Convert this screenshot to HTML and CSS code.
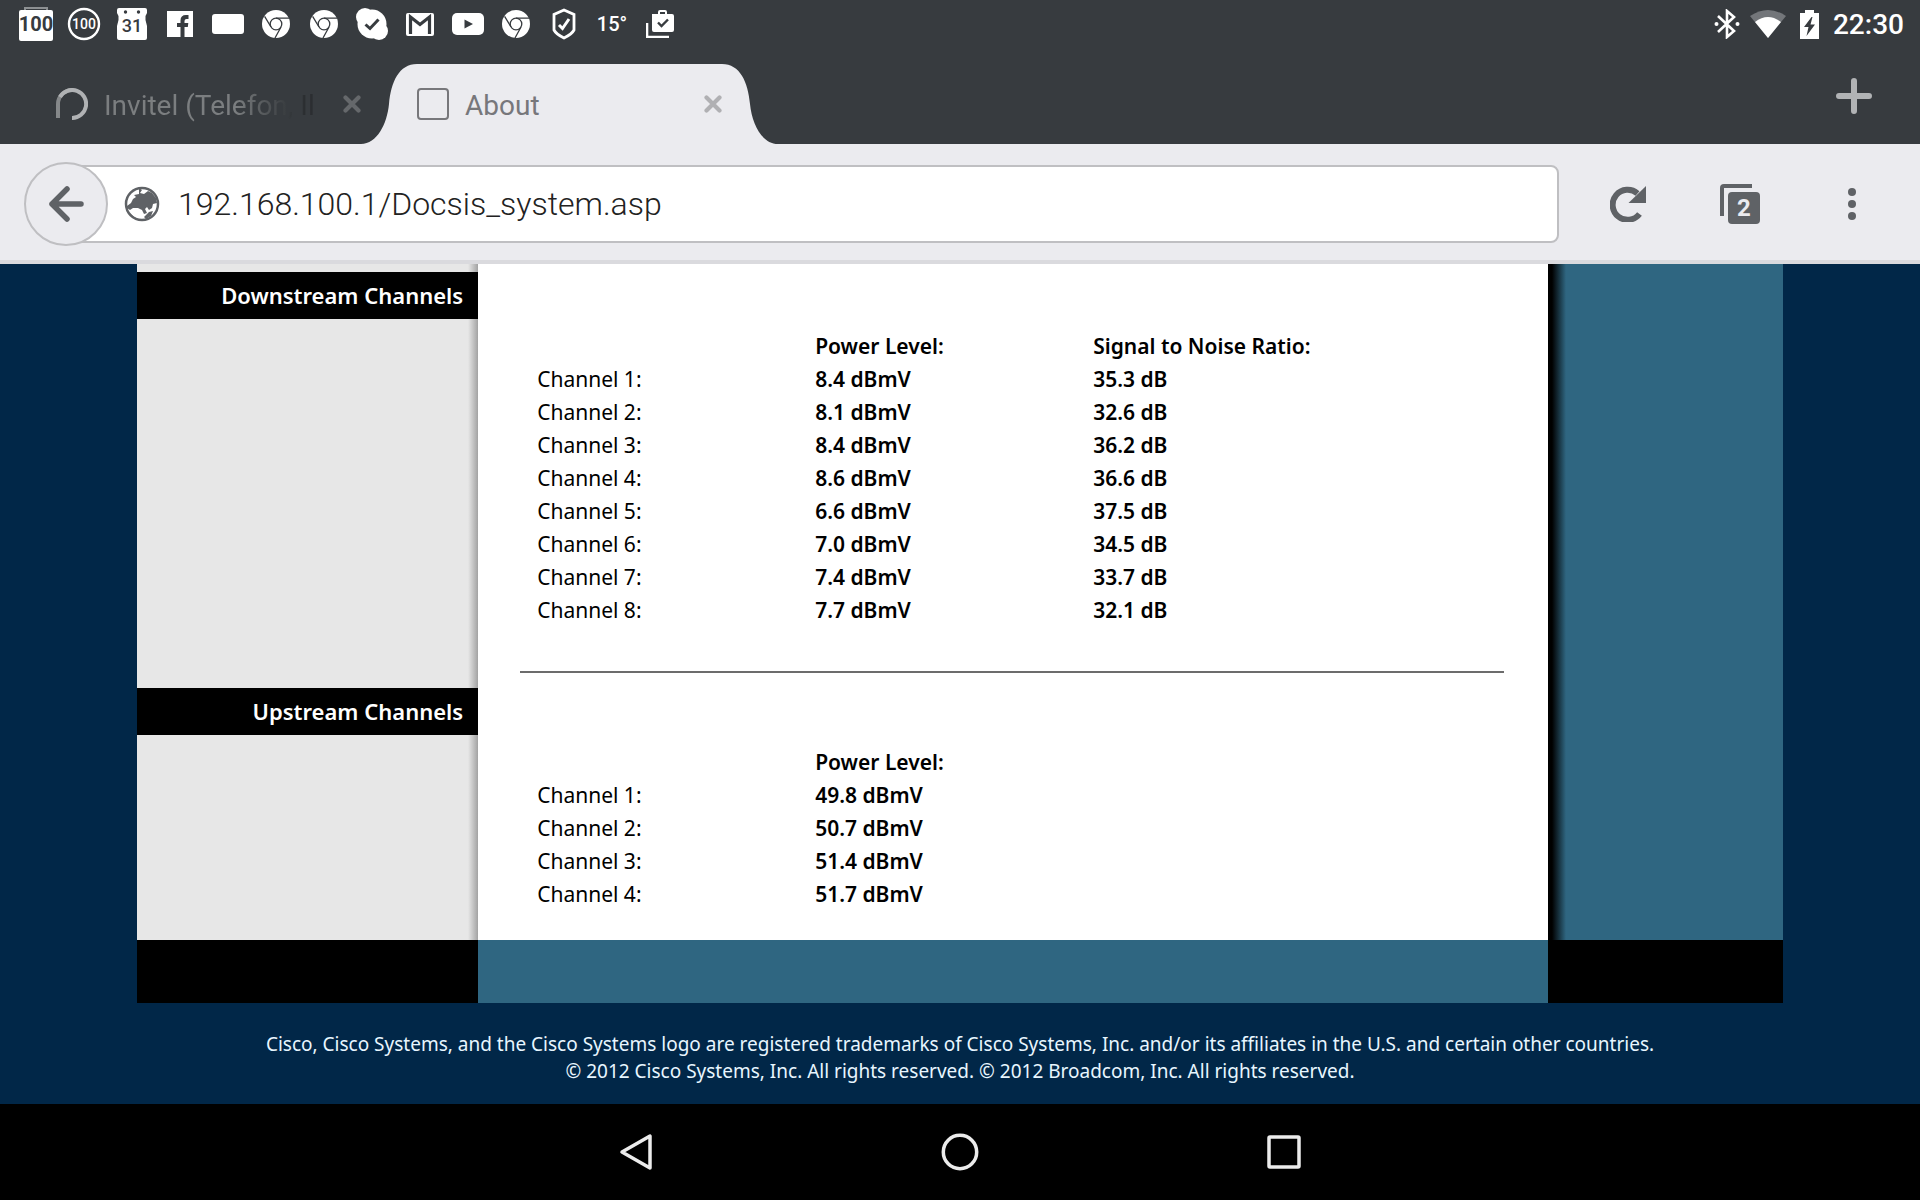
FILE: index.html
```html
<!DOCTYPE html>
<html lang="en">
<head>
    <meta charset="utf-8">
    <meta name="viewport" content="width=device-width, initial-scale=1.0">
    <title>About</title>
    <link rel="stylesheet" href="styles.css">
</head>
<body>
    <!-- shared icons -->
    <svg class="defs" width="0" height="0" aria-hidden="true">
        <symbol id="chrome" viewBox="0 0 28 28">
            <circle cx="14" cy="14" r="14" fill="#fff"/>
            <g fill="none" stroke="#373b3f" stroke-width="1.3">
                <circle cx="14" cy="14" r="5.8"/>
                <path d="M14 8.2H27M9 17L2.6 6.4M19 17L13 28"/>
            </g>
        </symbol>
        <symbol id="close" viewBox="0 0 18 18">
            <path d="M2.500 2.500L15.500 15.500M15.500 2.500L2.500 15.500" stroke="currentColor" stroke-width="4.200" stroke-linecap="round"/>
        </symbol>
    </svg>

    <div class="statusbar">
        <div class="notifications">
            <span class="slot"><svg width="34" height="34" viewBox="0 0 34 34"><path d="M6 3V1h22v2" fill="none" stroke="#8d9092" stroke-width="2"/><rect y="3" width="34" height="31" rx="2" fill="#fff"/></svg><b class="num num-box">100</b></span>
            <span class="slot"><svg width="34" height="34" viewBox="0 0 34 34"><circle cx="17" cy="17" r="15" fill="none" stroke="#fff" stroke-width="2.400"/></svg><b class="num num-ring">100</b></span>
            <span class="slot"><svg width="32" height="32" viewBox="0 0 32 32"><path d="M3 0H29Q31 0 31 2V5L29.500 8V12L31 18V30Q31 32 29 32H3Q1 32 1 30V18L2.500 12V8L1 5V2Q1 0 3 0Z" fill="#fff"/><circle cx="9.500" cy="4" r="1.700" fill="#373b3f"/><circle cx="22.500" cy="4" r="1.700" fill="#373b3f"/></svg><b class="num num-cal">31</b></span>
            <span class="slot"><svg width="26" height="26" viewBox="0 0 26 26"><path d="M0 0H26V26H0Z" fill="#fff"/><path d="M13.500 26V16H10V12H13.500V9.500Q13.500 4 19 4H21.500V8H19.500Q17.500 8 17.500 10V12H21.300L20.800 16H17.500V26Z" fill="#373b3f"/></svg></span>
            <span class="slot"><svg width="32" height="20" viewBox="0 0 32 20"><rect width="32" height="20" rx="3" fill="#fff"/></svg></span>
            <span class="slot"><svg width="28" height="28"><use href="#chrome"/></svg></span>
            <span class="slot"><svg width="28" height="28"><use href="#chrome"/></svg></span>
            <span class="slot"><svg width="32" height="32" viewBox="0 0 32 32"><circle cx="16" cy="16" r="14.500" fill="#fff"/><circle cx="9" cy="9" r="9" fill="#fff"/><circle cx="23" cy="23" r="9" fill="#fff"/><path d="M9.500 16.500L14 20.500L22.500 11.500" fill="none" stroke="#373b3f" stroke-width="3"/></svg></span>
            <span class="slot"><svg width="28" height="23" viewBox="0 0 28 23"><rect width="28" height="23" rx="2" fill="#fff"/><path d="M4.500 21V4L14 11.500L23.500 4V21" fill="none" stroke="#373b3f" stroke-width="3.200"/></svg></span>
            <span class="slot"><svg width="32" height="22" viewBox="0 0 32 22"><rect width="32" height="22" rx="5" fill="#fff"/><path d="M12.500 6.500L21 11L12.500 15.500Z" fill="#373b3f"/></svg></span>
            <span class="slot"><svg width="28" height="28"><use href="#chrome"/></svg></span>
            <span class="slot"><svg width="24" height="32" viewBox="0 0 24 32"><path d="M12 2L22 6.500V22Q20 26 12 30Q4 26 2 22V6.500Z" fill="none" stroke="#fff" stroke-width="2.800"/><path d="M7 17L10.500 20.500L17 11" fill="none" stroke="#fff" stroke-width="3"/></svg></span>
            <span class="slot temp">15°</span>
            <span class="slot"><svg width="28" height="28" viewBox="0 0 28 28"><path d="M1 13V27H23" fill="none" stroke="#fff" stroke-width="2.600"/><path d="M6 4H12V2Q12 0 14 0H19Q21 0 21 2V4H26Q28 4 28 6V20Q28 22 26 22H8Q6 22 6 20ZM14 4H19V2H14Z" fill="#fff" fill-rule="evenodd"/><path d="M12 12.500L15.500 16L22 9.500" fill="none" stroke="#373b3f" stroke-width="2.400"/></svg></span>
        </div>
        <div class="system">
            <svg width="26" height="30" viewBox="0 0 26 30"><path d="M4 7L20 22L13 28V2L20 8L4 23" fill="none" stroke="#fff" stroke-width="2.600"/><circle cx="2.500" cy="15" r="2" fill="#fff"/><circle cx="23.500" cy="15" r="2" fill="#fff"/></svg>
            <svg width="36" height="28" viewBox="0 0 36 28"><path d="M0 6Q18 -6 36 6L18 28Z" fill="#73767a"/><path d="M5 12Q18 2 31 12L18 28Z" fill="#fff"/></svg>
            <svg class="battery" width="19" height="29" viewBox="0 0 19 29"><path d="M0 3H5V0H14V3H19V29H0Z" fill="#fff"/><path d="M11.500 7L4 17H8.500L6.500 26L15 14.500H10.500L12.500 7Z" fill="#373b3f"/></svg>
            <span class="clock">22:30</span>
        </div>
    </div>

    <div class="tabs">
        <div class="tab">
            <svg width="32" height="32" viewBox="0 0 32 32"><path d="M16 2A14 14 0 0 0 2 16V30" fill="none" stroke="#85888a" stroke-width="4"/><path d="M4 9A14 14 0 1 1 16 30" fill="none" stroke="#b0b2b4" stroke-width="4"/></svg>
            <span class="tab-title fading">Invitel (Telefon, Il</span>
            <button class="tab-close" type="button" aria-label="Close tab"><svg width="18" height="18"><use href="#close"/></svg></button>
        </div>
        <div class="tab active">
            <svg width="56" height="80" viewBox="0 0 56 80"><path d="M0 80C16 80 26 60 28 40C30 18 38 0 56 0V80Z" fill="#ebebef"/></svg>
            <div class="tab-body">
                <span class="blank-icon"></span>
                <span class="tab-title">About</span>
                <button class="tab-close" type="button" aria-label="Close tab"><svg width="18" height="18"><use href="#close"/></svg></button>
            </div>
            <svg width="56" height="80" viewBox="0 0 56 80"><path d="M56 80C40 80 30 60 28 40C26 18 18 0 0 0V80Z" fill="#ebebef"/></svg>
        </div>
        <button class="new-tab" type="button" aria-label="New tab"><svg width="36" height="36" viewBox="0 0 36 36"><path d="M18 3V33M3 18H33" stroke="#b1b3b5" stroke-width="6" stroke-linecap="round"/></svg></button>
    </div>

    <div class="toolbar">
        <button class="back" type="button" aria-label="Back"><svg width="36" height="36" viewBox="0 0 36 36"><path d="M33 18H4M19 3L4 18L19 33" fill="none" stroke="#5f6266" stroke-width="5.500" stroke-linecap="round" stroke-linejoin="round"/></svg></button>
        <label class="urlbox">
            <svg width="36" height="36" viewBox="0 0 36 36"><circle cx="18" cy="18" r="16" fill="#fff" stroke="#5f6266" stroke-width="2.500"/><path d="M15 2L18 4L16 7L20 8L24 5L28 7L32 12L33 17L29 18L28 22L25 24L23 21L21 23L23 27L20 28L18 24L14 22L9 22L6 24L3 22L3 20L7 17L9 13L12 11L10 9L15 8ZM25 26L29 25L27 30L22 33L20 31ZM6 27L9 30L12 32L9 32Z" fill="#5f6266"/></svg>
            <input class="url" type="text" value="192.168.100.1/Docsis_system.asp" aria-label="Address">
        </label>
        <button class="tool" type="button" aria-label="Reload"><svg width="36" height="36" viewBox="0 0 36 36"><path d="M29.500 28A15 15 0 1 1 27.500 7.500" fill="none" stroke="#5f6266" stroke-width="6"/><path d="M36 0V17H18.500Z" fill="#5f6266"/></svg></button>
        <button class="tool" type="button" aria-label="Tabs">
            <span class="tab-stack"><span class="tab-count">2</span></span>
        </button>
        <button class="tool" type="button" aria-label="Menu"><svg width="8" height="32" viewBox="0 0 8 32"><g fill="#5f6266"><circle cx="4" cy="4" r="4"/><circle cx="4" cy="16" r="4"/><circle cx="4" cy="28" r="4"/></g></svg></button>
    </div>

    <main class="page">
        <div class="content">
            <section class="row">
                <div class="side side-first"><h2>Downstream Channels</h2></div>
                <div class="main main-first">
                    <table class="levels">
                        <thead>
                            <tr><td></td><th scope="col">Power Level:</th><th scope="col">Signal to Noise Ratio:</th></tr>
                        </thead>
                        <tbody>
                            <tr><td>Channel 1:</td><td class="val">8.4 dBmV</td><td class="val">35.3 dB</td></tr>
                            <tr><td>Channel 2:</td><td class="val">8.1 dBmV</td><td class="val">32.6 dB</td></tr>
                            <tr><td>Channel 3:</td><td class="val">8.4 dBmV</td><td class="val">36.2 dB</td></tr>
                            <tr><td>Channel 4:</td><td class="val">8.6 dBmV</td><td class="val">36.6 dB</td></tr>
                            <tr><td>Channel 5:</td><td class="val">6.6 dBmV</td><td class="val">37.5 dB</td></tr>
                            <tr><td>Channel 6:</td><td class="val">7.0 dBmV</td><td class="val">34.5 dB</td></tr>
                            <tr><td>Channel 7:</td><td class="val">7.4 dBmV</td><td class="val">33.7 dB</td></tr>
                            <tr><td>Channel 8:</td><td class="val">7.7 dBmV</td><td class="val">32.1 dB</td></tr>
                        </tbody>
                    </table>
                    <hr>
                </div>
                <div class="right"></div>
            </section>
            <section class="row">
                <div class="side"><h2>Upstream Channels</h2></div>
                <div class="main">
                    <table class="levels">
                        <thead>
                            <tr><td></td><th scope="col">Power Level:</th><td></td></tr>
                        </thead>
                        <tbody>
                            <tr><td>Channel 1:</td><td class="val">49.8 dBmV</td><td></td></tr>
                            <tr><td>Channel 2:</td><td class="val">50.7 dBmV</td><td></td></tr>
                            <tr><td>Channel 3:</td><td class="val">51.4 dBmV</td><td></td></tr>
                            <tr><td>Channel 4:</td><td class="val">51.7 dBmV</td><td></td></tr>
                        </tbody>
                    </table>
                </div>
                <div class="right"></div>
            </section>
            <div class="row band">
                <div class="band-dark"></div>
                <div class="band-teal"></div>
                <div class="band-dark"></div>
            </div>
        </div>
        <footer class="legal">
            Cisco, Cisco Systems, and the Cisco Systems logo are registered trademarks of Cisco Systems, Inc. and/or its affiliates in the U.S. and certain other countries.<br>
            © 2012 Cisco Systems, Inc. All rights reserved. © 2012 Broadcom, Inc. All rights reserved.
        </footer>
    </main>

    <nav class="navbar">
        <button type="button" aria-label="Back"><svg width="36" height="40" viewBox="0 0 36 40"><path d="M32 4V36L4 20Z" fill="none" stroke="#ececec" stroke-width="3.500" stroke-linejoin="round"/></svg></button>
        <button type="button" aria-label="Home"><svg width="40" height="40" viewBox="0 0 40 40"><circle cx="20" cy="20" r="16.700" fill="none" stroke="#ececec" stroke-width="3.500"/></svg></button>
        <button type="button" aria-label="Recent apps"><svg width="34" height="34" viewBox="0 0 34 34"><rect x="2" y="2" width="30" height="30" rx="1" fill="none" stroke="#ececec" stroke-width="3.500"/></svg></button>
    </nav>
</body>
</html>
```

FILE: styles.css
```css
* {
    box-sizing: border-box;
}

body {
    margin: 0;
    min-height: 100vh;
    display: flex;
    flex-direction: column;
    font-family: Roboto, sans-serif;
    background-color: #012748;
}

button {
    display: flex;
    align-items: center;
    justify-content: center;
    padding: 0;
    border: none;
    background: transparent;
    cursor: pointer;
}

svg {
    display: block;
    flex: none;
}

.defs {
    position: absolute;
}

/* android status bar */
.statusbar {
    display: flex;
    justify-content: space-between;
    height: 48px;
    padding: 0 16px 0 12px;
    color: #fff;
    background-color: #373b3f;
}

.notifications {
    display: flex;
}

.slot {
    display: grid;
    place-items: center;
    width: 48px;
    height: 48px;
}

.slot > * {
    grid-area: 1 / 1;
}

.num {
    font-weight: 500;
    line-height: 20px;
}

.num-box {
    font-size: 20px;
    font-weight: 700;
    color: #373b3f;
}

.num-ring {
    font-size: 14px;
}

.num-cal {
    padding-top: 4px;
    font-size: 18px;
    color: #373b3f;
}

.temp {
    font-size: 20px;
    font-weight: 500;
}

.system {
    display: flex;
    align-items: center;
    gap: 10px;
}

.battery {
    margin: 0 4px;
}

.clock {
    font-size: 28px;
    font-weight: 500;
}

/* browser tabs */
.tabs {
    display: flex;
    align-items: flex-end;
    height: 96px;
    padding: 0 48px 0 56px;
    background-color: #373b3f;
}

.tab {
    display: flex;
    align-items: center;
    height: 80px;
    width: 305px;
    font-size: 28px;
    color: #7b7e80;
}

.tab.active {
    width: auto;
    color: #77777b;
}

.tab-body {
    display: flex;
    align-items: center;
    width: 305px;
    height: 80px;
    background-color: #ebebef;
}

.tab-title {
    flex: 1;
    margin-left: 16px;
    padding-top: 2px;
    overflow: hidden;
    white-space: nowrap;
}

.fading {
    color: transparent;
    background: linear-gradient(90deg, #7b7e80 55%, #34383b 78%, #2b2e31 84%);
    -webkit-background-clip: text;
    background-clip: text;
}

.tab-close {
    color: #65686b;
}

.active .tab-close {
    color: #b0b0b3;
}

.blank-icon {
    width: 32px;
    height: 32px;
    border: 2px solid #77777b;
    border-radius: 4px;
}

.new-tab {
    height: 96px;
    margin-left: auto;
}

/* address bar */
.toolbar {
    display: flex;
    align-items: center;
    height: 120px;
    padding: 4px 12px 0 24px;
    border-bottom: 4px solid #dadade;
    background-color: #ebebef;
}

.back {
    position: relative;
    z-index: 1;
    width: 84px;
    height: 84px;
    border: 2px solid #bfbfc2;
    border-radius: 50%;
    background-color: #ebebef;
}

.urlbox {
    display: flex;
    flex: 1;
    align-items: center;
    gap: 18px;
    height: 78px;
    margin: 0 13px 0 -42px;
    padding-left: 56px;
    border: 2px solid #bfbfc2;
    border-radius: 8px;
    background-color: #fff;
}

.url {
    flex: 1;
    min-width: 0;
    padding: 0;
    border: none;
    outline: none;
    font-family: Roboto, sans-serif;
    font-size: 32px;
    font-weight: 300;
    color: #222;
    background: transparent;
}

.tool {
    width: 112px;
    height: 84px;
}

.tab-stack {
    display: grid;
    place-items: end;
    width: 40px;
    height: 40px;
    border-radius: 4px;
    background: linear-gradient(#5f6266, #5f6266) 0 0 / 32px 4px no-repeat,
                linear-gradient(#5f6266, #5f6266) 0 0 / 4px 32px no-repeat;
}

.tab-count {
    width: 32px;
    height: 32px;
    border-radius: 4px;
    font-family: Roboto, sans-serif;
    font-size: 24px;
    font-weight: 700;
    line-height: 32px;
    color: #ebebef;
    background-color: #5f6266;
}

/* modem page */
.page {
    flex: 1;
    font-family: "Noto Sans", sans-serif;
}

.content {
    width: 85.7%;
    margin: 0 auto;
}

.row {
    display: grid;
    grid-template-columns: 341fr 1070fr 235fr;
}

.side {
    background: linear-gradient(270deg, #a2a2a2, #e7e7e7 10px);
}

.side-first {
    padding-top: 8px;
}

.side h2 {
    margin: 0;
    padding-right: 15px;
    font-size: 22px;
    font-weight: 600;
    line-height: 47px;
    text-align: right;
    color: #fff;
    background-color: #000;
}

.main {
    padding: 58px 44px 29px 42px;
    background-color: #fff;
}

.main-first {
    padding-top: 66px;
    padding-bottom: 15px;
}

.levels {
    width: 834px;
    margin-left: 17px;
    border-collapse: collapse;
    table-layout: fixed;
    font-size: 21px;
    line-height: 33px;
    color: #000;
}

.levels th,
.levels td {
    height: 33px;
    padding: 0;
    text-align: left;
}

.levels th,
.levels .val {
    font-weight: 600;
}

.main hr {
    height: 2px;
    margin: 44px 0 0;
    border: none;
    background-color: #6c6c6c;
}

.right {
    background: linear-gradient(90deg, #000 4px, #2f6681 18px);
}

.band {
    height: 63px;
}

.band-dark {
    background-color: #000;
}

.band-teal {
    background-color: #2f6681;
}

.legal {
    padding: 28px 0 18px;
    font-size: 19px;
    line-height: 27px;
    text-align: center;
    color: #e8f6ff;
}

/* android navigation */
.navbar {
    display: flex;
    justify-content: center;
    height: 96px;
    background-color: #000;
}

.navbar button {
    width: 324px;
}
```
